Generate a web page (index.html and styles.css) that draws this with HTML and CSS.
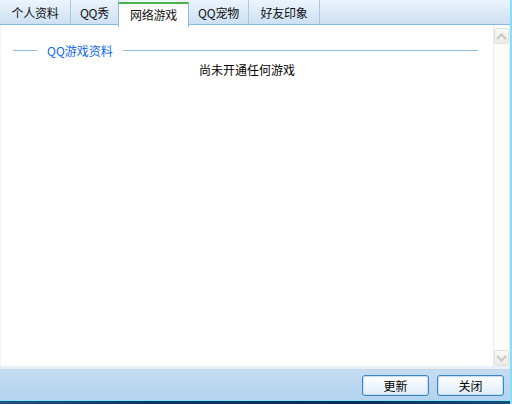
FILE: index.html
```html
<!DOCTYPE html>
<html lang="zh-CN">
<head>
    <meta charset="UTF-8">
    <meta name="viewport" content="width=device-width, initial-scale=1.0">
    <title>QQ资料</title>
    <link rel="stylesheet" href="styles.css">
</head>
<body>
    <div class="window">
        <div class="tabs">
            <div class="tab">个人资料</div>
            <div class="tab tabShort">QQ秀</div>
            <div class="tab active">网络游戏</div>
            <div class="tab tabMid">QQ宠物</div>
            <div class="tab">好友印象</div>
        </div>
        <div class="panel">
            <div class="content">
                <div class="legend">
                    <span class="legendLine short"></span>
                    <span class="legendText">QQ游戏资料</span>
                    <span class="legendLine"></span>
                </div>
                <p class="message">尚未开通任何游戏</p>
            </div>
            <div class="scrollbar">
                <div class="scrollBtn">
                    <svg width="11" height="7" viewBox="0 0 11 7"><path d="M1 6 L5.5 1.5 L10 6" fill="none" stroke="#c8c8c0" stroke-width="2"/></svg>
                </div>
                <div class="track"></div>
                <div class="scrollBtn">
                    <svg width="11" height="7" viewBox="0 0 11 7"><path d="M1 1 L5.5 5.5 L10 1" fill="none" stroke="#c8c8c0" stroke-width="2"/></svg>
                </div>
            </div>
        </div>
        <div class="band"></div>
        <div class="footer">
            <button class="btn">更新</button>
            <button class="btn">关闭</button>
        </div>
        <div class="taskbar"></div>
    </div>
</body>
</html>
```

FILE: styles.css
```css
*
{
    box-sizing: border-box;
}
body
{
    margin: 0px;
    font-family: "Noto Sans CJK SC", "Liberation Sans", sans-serif;
    font-size: 12px;
    color: #000;
}
.window
{
    width: 512px;
    height: 404px;
    display: flex;
    flex-direction: column;
    border-right: 2px solid #86def6;
    background-color: #fff;
}
.tabs
{
    height: 25px;
    display: flex;
    border-bottom: 1px solid #86b8e4;
    background: linear-gradient(#ecf4fc, #cde0f3);
}
.tab
{
    width: 71px;
    height: 24px;
    padding-top: 3px;
    line-height: 20px;
    text-align: center;
    letter-spacing: -0.2px;
    border-right: 1px solid #a8c8e6;
    color: #111;
}
.tabShort
{
    width: 48px;
}
.tabMid
{
    width: 60px;
}
.tab.active
{
    height: 25px;
    margin-left: -1px;
    margin-top: 2px;
    padding-top: 1px;
    border-top: 2px solid #4cb54a;
    border-left: 1px solid #8cbde6;
    border-right: 1px solid #8cbde6;
    background: linear-gradient(#f4f9fd, #fff 6px);
}
.panel
{
    flex: 1;
    display: flex;
    border-left: 1px solid #eef5fc;
}
.content
{
    flex: 1;
    padding-top: 19px;
}
.legend
{
    display: flex;
    align-items: center;
    padding: 0 15px 0 12px;
    height: 12px;
}
.legendLine
{
    flex: 1;
    height: 1px;
    background-color: #8fb8e2;
}
.legendLine.short
{
    flex: none;
    width: 24px;
}
.legendText
{
    margin: 0 10px;
    color: #1066f0;
}
.message
{
    margin: 5px 0 0 0;
    text-align: center;
    line-height: 18px;
}
.scrollbar
{
    width: 17px;
    padding: 3px 0 0 0;
    display: flex;
    flex-direction: column;
    border-left: 1px solid #ecece8;
    border-right: 1px solid #ecece8;
    background-color: #fcfcfb;
}
.scrollBtn
{
    width: 15px;
    height: 16px;
    display: flex;
    align-items: center;
    justify-content: center;
    border: 1px solid #e2e2dc;
    border-radius: 2px;
    background: linear-gradient(#f8f8f6, #ecebe6);
}
.track
{
    flex: 1;
}
.band
{
    height: 4px;
    background-color: #e8f1fa;
    border-bottom: 1px solid #c6d6e6;
}
.footer
{
    height: 30px;
    display: flex;
    justify-content: flex-end;
    align-items: center;
    gap: 8px;
    padding: 0 6px 0 0;
    background: linear-gradient(#c5ddf2, #b3d3ef);
}
.btn
{
    width: 67px;
    height: 21px;
    padding: 0;
    font-family: inherit;
    font-size: 12px;
    color: #000;
    border: 1px solid #3d84c0;
    border-radius: 3px;
    box-shadow: inset 0 0 0 1px #c4e0f8;
    background: linear-gradient(#ffffff, #dfecf8);
    cursor: pointer;
}
.taskbar
{
    height: 4px;
    border-top: 1px solid #7ee6f8;
    background: linear-gradient(90deg, #27507f, #0c3566 30%, #0a2c58 70%, #1a4a7a);
}
```
